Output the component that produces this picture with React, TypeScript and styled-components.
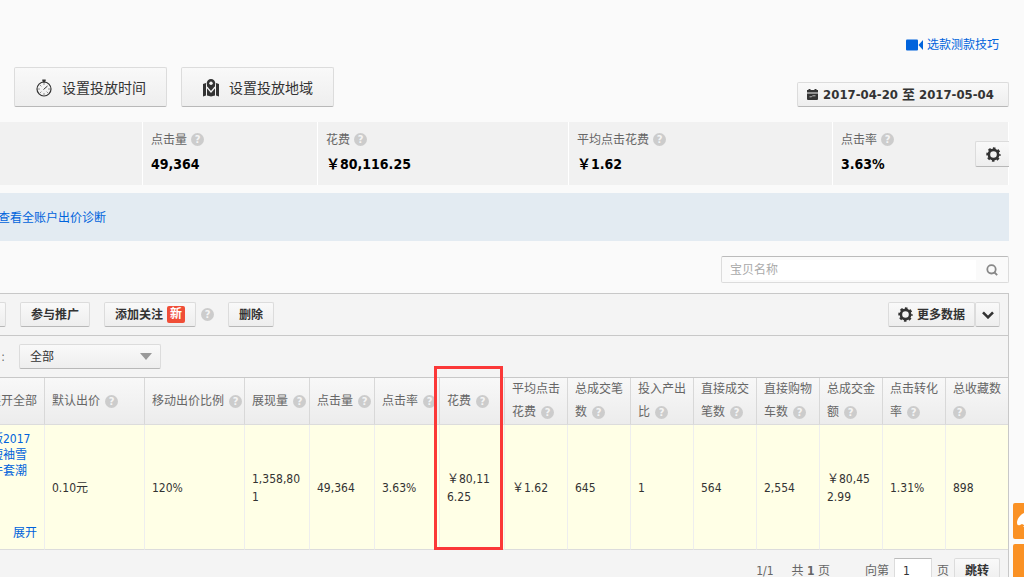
import React from "react";
import styled, { createGlobalStyle, css } from "styled-components";

const GlobalStyle = createGlobalStyle`
  * { box-sizing: border-box; }
  body {
    margin: 0;
    background: #fafafa;
    color: #333;
    font: 12px/18px "DejaVu Sans Condensed", "Noto Sans CJK SC", sans-serif;
  }
  button, input, select { font: inherit; color: inherit; }
  a { color: #0063dc; text-decoration: none; }
  svg { display: block; flex: none; }
`;

const Viewport = styled.div`
  position: relative;
  height: 100vh;
  overflow: hidden;
`;

/* The console is scrolled sideways, so its left edge lies outside the window. */
const Canvas = styled.main`
  margin: 0 15px 0 -20px;
  padding-top: 36px;
`;

const raised = css`
  display: inline-flex;
  align-items: center;
  justify-content: center;
  border: 1px solid #dcdcdc;
  border-bottom-color: #b8b8b8;
  border-radius: 2px;
  background: linear-gradient(#f9f9f9, #eee);
  color: #333;
`;

const TipRow = styled.div`
  display: flex;
  justify-content: flex-end;
  padding-right: 10px;
  height: 18px;
`;

const TipLink = styled.a`
  display: flex;
  align-items: center;
  gap: 3px;
`;

const ActionRow = styled.div`
  display: flex;
  align-items: flex-end;
  gap: 14px;
  margin-top: 13px;
  padding-left: 34px;
`;

const BigButton = styled.button`
  ${raised}
  width: 153px;
  height: 40px;
  padding: 2px 0 0;
  gap: 9px;
  font-size: 14px;
`;

const DateButton = styled.button`
  ${raised}
  height: 25px;
  width: 212px;
  margin-left: auto;
  padding: 0 5px 0 0;
  gap: 5px;
  font-size: 13px;
  font-weight: bold;
`;

const Summary = styled.section`
  display: grid;
  grid-template-columns: 163fr 175fr 251fr 264fr 176fr;
  margin-top: 15px;
  height: 63px;
  background: #f1f1f1;
`;

const Metric = styled.div`
  display: flex;
  align-items: center;
  justify-content: space-between;
  padding-left: 8px;
  border-right: 1px solid #fff;
`;

const MetricText = styled.div`
  padding-bottom: 4px;
`;

const MetricLabel = styled.div`
  display: flex;
  align-items: center;
  gap: 4px;
  line-height: 24px;
  color: #666;
`;

const MetricValue = styled.div`
  font-size: 14px;
  font-weight: bold;
  line-height: 24px;
  color: #000;
`;

const HelpDot = styled.span`
  display: inline-flex;
  align-items: center;
  justify-content: center;
  width: 13px;
  height: 13px;
  border-radius: 50%;
  background: #ccc;
  color: #f4f4f4;
  font-size: 11px;
  font-weight: bold;
  line-height: 13px;
`;

const GearButton = styled.button`
  ${raised}
  width: 34px;
  height: 26px;
  padding: 0 0 0 2px;
  margin: 1px -1px 0 0;
  border-right: 0;
  border-radius: 2px 0 0 2px;
`;

const Notice = styled.section`
  display: flex;
  align-items: center;
  margin-top: 8px;
  padding: 2px 0 0 18px;
  height: 48px;
  background: #e3ebf2;
`;

const SearchRow = styled.div`
  display: flex;
  justify-content: flex-end;
  padding: 15px 0 10px;
`;

const SearchBox = styled.form`
  display: flex;
  align-items: center;
  width: 288px;
  height: 27px;
  padding-left: 8px;
  border: 1px solid #dcdcdc;
  border-top-color: #bbb;
  border-radius: 2px;
`;

const SearchInput = styled.input`
  flex: 1;
  min-width: 0;
  height: 20px;
  padding: 0;
  border: 0;
  background: #fff;
  &::placeholder { color: #aaa; opacity: 1; }
`;

const SearchButton = styled.button`
  display: flex;
  justify-content: center;
  width: 32px;
  padding: 0;
  border: 0;
  background: none;
  color: #888;
`;

const Panel = styled.section`
  border-top: 1px solid #c8c8c8;
  border-right: 1px solid #c8c8c8;
  background: #f4f4f4;
`;

const Toolbar = styled.div`
  display: flex;
  align-items: center;
  height: 42px;
  padding-right: 8px;
  border-bottom: 1px solid #c8c8c8;
`;

const ToolButton = styled.button<{ $w: number; $gap?: number }>`
  ${raised}
  width: ${(p) => p.$w}px;
  height: 25px;
  margin-right: ${(p) => p.$gap ?? 14}px;
  padding: 0;
  gap: 4px;
  font-weight: bold;
`;

const ToolHelp = styled.span`
  display: flex;
  margin-right: 14px;
`;

const NewTag = styled.span`
  padding: 0 3px;
  border-radius: 2px;
  background: #f04e37;
  color: #fff;
  line-height: 17px;
`;

const SplitButton = styled.div`
  display: flex;
  margin-left: auto;
`;

const FilterRow = styled.div`
  display: flex;
  align-items: center;
  height: 41px;
`;

const FilterLabel = styled.label`
  width: 25px;
  margin-right: 14px;
  text-align: right;
  color: #666;
`;

const SelectWrap = styled.div`
  display: grid;
  align-items: center;
  width: 142px;
  & > * { grid-area: 1 / 1; }
  & > svg { justify-self: end; margin-right: 9px; pointer-events: none; }
`;

const Select = styled.select`
  ${raised}
  appearance: none;
  width: 100%;
  height: 25px;
  padding: 0 10px;
`;

const Table = styled.table`
  width: 100%;
  table-layout: fixed;
  border-collapse: separate;
  border-spacing: 0;
  border-top: 1px solid #c8c8c8;
`;

const Th = styled.th`
  position: relative;
  height: 47px;
  padding: 0 0 0 7px;
  border-right: 1px solid #d8d8d8;
  border-bottom: 1px solid #dcdcdc;
  background: linear-gradient(#f8f8f8, #ececec);
  color: #666;
  font-weight: normal;
  line-height: 23px;
  text-align: left;
  &:last-child { border-right: 0; }
`;

const HeadText = styled.span`
  margin-right: 5px;
`;

const Td = styled.td`
  height: 125px;
  padding: 1px 8px 0 7px;
  border-right: 1px solid #eee;
  border-bottom: 1px solid #dcdcdc;
  background: #ffffe6;
  word-break: break-all;
  &:last-child { border-right: 0; }
`;

const RightText = styled.div`
  display: flex;
  justify-content: flex-end;
  padding-right: 7px;
  white-space: nowrap;
`;

const Product = styled.div`
  display: flex;
  flex-direction: column;
  justify-content: space-between;
  height: 123px;
  margin: 0 -8px 0 -3px;
  padding: 5px 0 8px 7px;
  line-height: 16px;
`;

const Highlight = styled.span`
  position: absolute;
  z-index: 2;
  top: -12px;
  left: -6px;
  width: 69px;
  height: 184px;
  border: 3px solid #fb3838;
  pointer-events: none;
`;

const Pager = styled.nav`
  display: flex;
  align-items: center;
  justify-content: flex-end;
  padding: 8px 8px 8px 0;
  color: #666;
`;

const PagerText = styled.span<{ $right: number }>`
  margin-right: ${(p) => p.$right}px;
`;

const PageInput = styled.input`
  width: 38px;
  height: 25px;
  margin: 0 5px;
  padding: 0 8px;
  border: 1px solid #dcdcdc;
  border-top-color: #bbb;
  background: #fff;
  color: #333;
`;

const JumpButton = styled.button`
  ${raised}
  width: 46px;
  height: 25px;
  margin-left: 5px;
  padding: 0;
  font-weight: bold;
`;

const SideDock = styled.aside`
  position: absolute;
  top: 503px;
  right: 0;
  display: flex;
  flex-direction: column;
  gap: 5px;
  width: 11px;
`;

const DockButton = styled.button`
  display: flex;
  align-items: center;
  height: 36px;
  padding: 0 0 0 4px;
  border: 0;
  border-radius: 2px 0 0 2px;
  background: #fa9124;
  overflow: hidden;
`;

const Gear = () => (
  <svg width="15" height="15" viewBox="0 0 15 15">
    <circle cx="7.5" cy="7.5" r="4.6" fill="none" stroke="#333" strokeWidth="2.6" />
    <circle cx="7.5" cy="7.5" r="6.2" fill="none" stroke="#333" strokeWidth="2" strokeDasharray="2.6 2.27" strokeDashoffset="1.3" />
  </svg>
);

const Stopwatch = () => (
  <svg width="18" height="20" viewBox="0 0 18 20" fill="none" stroke="#333">
    <circle cx="9" cy="11" r="7" strokeWidth="1.2" />
    <path d="M9 5.500v1M4.500 11h-1M14.500 11h-1M9 15.500v1M5.500 7.500l.7.7M5.500 14.500l.7-.7M12.500 14.500l-.7-.7M8.500 11.500l4-3.500" strokeWidth="1" />
    <path d="M7.300 2.500h3.400M9 2.500v2" strokeWidth="2" />
  </svg>
);

const MapPin = () => (
  <svg width="18" height="18" viewBox="0 0 18 18" fill="#333">
    <path d="M1 5l3-1v12.500L1 17.500zM5 3.500h1L9 11l3-7.500h1v13l-4 1-4-1zM14 4l3 1v12.500l-3-1z" />
    <path d="M9 0a4.300 4.300 0 0 0-4.300 4.300C4.700 7.500 9 12 9 12s4.300-4.500 4.300-7.700A4.300 4.300 0 0 0 9 0z" />
    <circle cx="9" cy="4.300" r="1.700" fill="#f4f4f4" />
    <path d="M4.800 8L9 13l4.200-5" fill="none" stroke="#f4f4f4" strokeWidth="1.300" />
  </svg>
);

const Calendar = () => (
  <svg width="11" height="11" viewBox="0 0 11 11" fill="#333">
    <path d="M1.500 0h2v1h4V0h2v1H11v2.500H0V1h1.500zM0 4.500h11V10q0 1-1 1H1q-1 0-1-1z" />
    <path d="M2.500 7.800h2l1-1h3" fill="none" stroke="#bbb" />
  </svg>
);

const Camera = () => (
  <svg width="18" height="12" viewBox="0 0 18 12" fill="#0063dc">
    <rect x="0" y="0.500" width="12" height="11" rx="1" />
    <path d="M12.500 6L17 1v10z" />
  </svg>
);

const Magnifier = () => (
  <svg width="12" height="12" viewBox="0 0 12 12" fill="none" stroke="currentColor" strokeWidth="1.800">
    <circle cx="5.500" cy="5.300" r="4.200" />
    <path d="M8 8l3.200 3.200" />
  </svg>
);

const Chevron = () => (
  <svg width="12" height="8" viewBox="0 0 12 8" fill="none" stroke="#333" strokeWidth="2.600">
    <path d="M1 1.300l5 5 5-5" />
  </svg>
);

const Caret = () => (
  <svg width="12" height="7" viewBox="0 0 12 7" fill="#999">
    <path d="M0 0h12L6 7z" />
  </svg>
);

const Bell = () => (
  <svg width="14" height="18" viewBox="0 0 14 18" fill="#fff">
    <path d="M7 1C3 3 0 7 0 11q0 3 3 2l2-1 2 1h7V1z" />
    <path d="M6 14l3 3V14z" />
  </svg>
);

const Help = () => <HelpDot>?</HelpDot>;

const metrics = [
  ["点击量", "49,364"],
  ["花费", "￥80,116.25"],
  ["平均点击花费", "￥1.62"],
  ["点击率", "3.63%"],
];

const columns = [
  { name: "默认出价", value: "0.10元", width: 100 },
  { name: "移动出价比例", value: "120%", width: 100 },
  { name: "展现量", value: "1,358,801", width: 65 },
  { name: "点击量", value: "49,364", width: 65 },
  { name: "点击率", value: "3.63%", width: 65 },
  { name: "花费", value: "￥80,116.25", width: 65, marked: true },
  { name: "平均点击花费", value: "￥1.62", width: 63 },
  { name: "总成交笔数", value: "645", width: 63 },
  { name: "投入产出比", value: "1", width: 63 },
  { name: "直接成交笔数", value: "564", width: 63 },
  { name: "直接购物车数", value: "2,554", width: 63 },
  { name: "总成交金额", value: "￥80,452.99", width: 63 },
  { name: "点击转化率", value: "1.31%", width: 63 },
  { name: "总收藏数", value: "898", width: 63 },
];

export default function App() {
  return (
    <Viewport>
      <GlobalStyle />
      <Canvas>
        <TipRow>
          <TipLink href="#tips"><Camera />选款测款技巧</TipLink>
        </TipRow>
        <ActionRow>
          <BigButton type="button"><Stopwatch />设置投放时间</BigButton>
          <BigButton type="button"><MapPin />设置投放地域</BigButton>
          <DateButton type="button"><Calendar />2017-04-20 至 2017-05-04</DateButton>
        </ActionRow>

        <Summary>
          <Metric />
          {metrics.map(([label, value], i) => (
            <Metric key={label}>
              <MetricText>
                <MetricLabel>{label}<Help /></MetricLabel>
                <MetricValue>{value}</MetricValue>
              </MetricText>
              {i === metrics.length - 1 && (
                <GearButton type="button" aria-label="设置"><Gear /></GearButton>
              )}
            </Metric>
          ))}
        </Summary>

        <Notice><a href="#diagnosis">查看全账户出价诊断</a></Notice>

        <SearchRow>
          <SearchBox>
            <SearchInput aria-label="宝贝名称" placeholder="宝贝名称" />
            <SearchButton type="button" aria-label="搜索"><Magnifier /></SearchButton>
          </SearchBox>
        </SearchRow>

        <Panel>
          <Toolbar>
            <ToolButton type="button" $w={26} aria-label="操作" />
            <ToolButton type="button" $w={70}>参与推广</ToolButton>
            <ToolButton type="button" $w={92} $gap={5}>添加关注<NewTag>新</NewTag></ToolButton>
            <ToolHelp><Help /></ToolHelp>
            <ToolButton type="button" $w={46}>删除</ToolButton>
            <SplitButton>
              <ToolButton type="button" $w={87} $gap={0}><Gear />更多数据</ToolButton>
              <ToolButton type="button" $w={25} $gap={0} aria-label="展开"><Chevron /></ToolButton>
            </SplitButton>
          </Toolbar>

          <FilterRow>
            <FilterLabel htmlFor="filter">:</FilterLabel>
            <SelectWrap>
              <Select id="filter"><option>全部</option></Select>
              <Caret />
            </SelectWrap>
          </FilterRow>

          <Table>
            <colgroup>
              <col style={{ width: 65 }} />
              {columns.map((c, i) => (
                <col key={c.name} style={i < columns.length - 1 ? { width: c.width } : undefined} />
              ))}
            </colgroup>
            <thead>
              <tr>
                <Th><RightText>展开全部</RightText></Th>
                {columns.map((c) => (
                  <Th key={c.name}>
                    <HeadText>{c.name}</HeadText><Help />
                    {c.marked && <Highlight />}
                  </Th>
                ))}
              </tr>
            </thead>
            <tbody>
              <tr>
                <Td>
                  <Product>
                    <a href="#item">版2017<br />短袖雪<br />件套潮</a>
                    <RightText><a href="#expand">展开</a></RightText>
                  </Product>
                </Td>
                {columns.map((c) => <Td key={c.name}>{c.value}</Td>)}
              </tr>
            </tbody>
          </Table>

          <Pager>
            <PagerText $right={18}>1/1</PagerText>
            <PagerText $right={35}>共 <b>1</b> 页</PagerText>
            <label htmlFor="page">向第</label>
            <PageInput id="page" defaultValue="1" />
            <span>页</span>
            <JumpButton type="button">跳转</JumpButton>
          </Pager>
        </Panel>
      </Canvas>

      <SideDock>
        <DockButton type="button" aria-label="消息"><Bell /></DockButton>
        <DockButton type="button" aria-label="反馈" />
      </SideDock>
    </Viewport>
  );
}
